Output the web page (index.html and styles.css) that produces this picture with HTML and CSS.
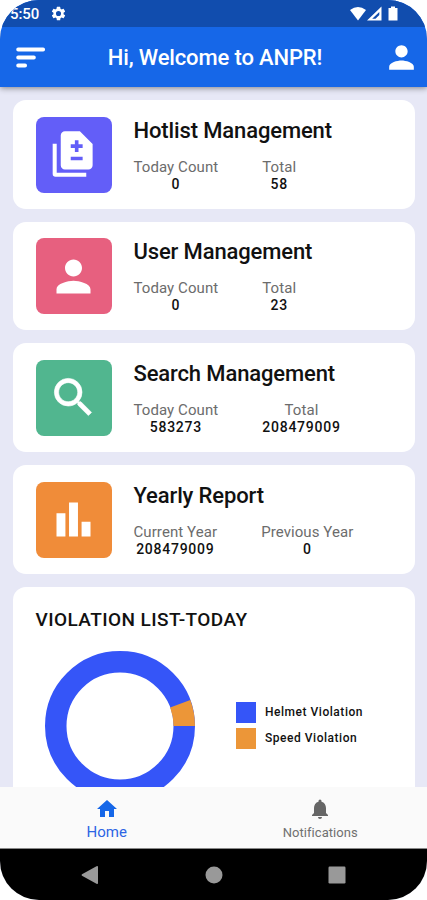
FILE: index.html
```html
<!DOCTYPE html>
<html lang="en">
<head>
<meta charset="utf-8">
<title>ANPR</title>
<link rel="stylesheet" href="styles.css">
</head>
<body>
<div class="phone">
  <header>
    <div class="status">
      <span class="clock">5:50</span>
      <svg class="gear" viewBox="0 0 24 24"><path d="M19.14 12.94c.04-.3.06-.61.06-.94s-.02-.64-.07-.94l2.03-1.58a.49.49 0 0 0 .12-.61l-1.92-3.32a.49.49 0 0 0-.59-.22l-2.39.96a7 7 0 0 0-1.62-.94l-.36-2.54a.48.48 0 0 0-.48-.41h-3.84a.47.47 0 0 0-.47.41l-.36 2.54c-.59.24-1.13.57-1.62.94l-2.39-.96a.48.48 0 0 0-.59.22L2.74 8.87a.47.47 0 0 0 .12.61l2.03 1.58a7 7 0 0 0 0 1.88l-2.03 1.58a.49.49 0 0 0-.12.61l1.92 3.32c.12.22.37.29.59.22l2.39-.96c.5.38 1.03.7 1.62.94l.36 2.54c.05.24.24.41.48.41h3.84c.24 0 .44-.17.47-.41l.36-2.54a7 7 0 0 0 1.62-.94l2.39.96c.22.08.47 0 .59-.22l1.92-3.32a.47.47 0 0 0-.12-.61zM12 15.6A3.6 3.6 0 1 1 12 8.400a3.600 3.600 0 0 1 0 7.200z"/></svg>
      <svg class="signals" viewBox="0 0 49 16"><path d="M0 4Q8-2 16 4L8 14.500z"/><path fill-rule="evenodd" d="M31.500 .500v14H17zM29.300 6L22.200 12.800h3.300L29.300 9z"/><path d="M41 .500h4v1.500h2.500v12.500h-9V2H41z"/></svg>
    </div>
    <div class="appbar">
      <svg class="menu" viewBox="0 0 24 24"><g stroke="#fff" stroke-width="2.500" stroke-linecap="round"><path d="M4 6.800h16.200M4 12h10.200M4 17.200h4.500"/></g></svg>
      <h1>Hi, Welcome to ANPR!</h1>
      <svg class="account" viewBox="0 0 24 24"><path d="M12 12c2.210 0 4-1.790 4-4s-1.790-4-4-4-4 1.790-4 4 1.790 4 4 4zm0 2c-2.670 0-8 1.340-8 4v2h16v-2c0-2.660-5.330-4-8-4z"/></svg>
    </div>
  </header>
  <main>
    <section class="card">
      <div class="tile violet"><svg viewBox="0 0 24 24"><path d="M18 22.500H3.500c-.800 0-1.300-.500-1.300-1.300V6.900h1.900v13.700H18zM15 1H8c-1.100 0-2 .900-2 2v14c0 1.100.900 2 2 2h11c1.100 0 2-.900 2-2V7zm1.300 13.700h-5.600v-1.700h5.600zm0-5.800h-1.950v1.950h-1.700V8.900H10.700V7.200h1.950V5.250h1.700V7.200h1.950z"/></svg></div>
      <div class="info"><h2>Hotlist Management</h2>
        <div class="stats"><div><span>Today Count</span><b>0</b></div><div><span>Total</span><b>58</b></div></div></div>
    </section>
    <section class="card">
      <div class="tile pink"><svg viewBox="0 0 24 24"><path d="M12 12c2.210 0 4-1.790 4-4s-1.790-4-4-4-4 1.790-4 4 1.790 4 4 4zm0 2c-2.670 0-8 1.340-8 4v2h16v-2c0-2.660-5.330-4-8-4z"/></svg></div>
      <div class="info"><h2>User Management</h2>
        <div class="stats"><div><span>Today Count</span><b>0</b></div><div><span>Total</span><b>23</b></div></div></div>
    </section>
    <section class="card">
      <div class="tile green"><svg viewBox="0 0 24 24"><path stroke="#fff" stroke-width=".3" d="M15.500 14h-.790l-.280-.270A6.471 6.471 0 0 0 16 9.500 6.500 6.500 0 1 0 9.500 16c1.610 0 3.090-.590 4.230-1.570l.270.280v.790l5 4.990L20.490 19l-4.990-5zm-6 0C7.010 14 5 11.990 5 9.500S7.010 5 9.500 5 14 7.010 14 9.500 11.990 14 9.500 14z"/></svg></div>
      <div class="info"><h2>Search Management</h2>
        <div class="stats"><div><span>Today Count</span><b>583273</b></div><div><span>Total</span><b>208479009</b></div></div></div>
    </section>
    <section class="card">
      <div class="tile orange"><svg viewBox="0 0 24 24"><path d="M4 9h4.200v11H4zM15.800 13H20v7h-4.200zM9.900 4h4.200v16H9.900z"/></svg></div>
      <div class="info"><h2>Yearly Report</h2>
        <div class="stats"><div><span>Current Year</span><b>208479009</b></div><div><span>Previous Year</span><b>0</b></div></div></div>
    </section>
    <section class="card chart">
      <h3>VIOLATION LIST-TODAY</h3>
      <div class="plot">
        <svg class="donut" viewBox="-75 -75 150 150"><circle r="64.250" fill="none" stroke="#3555f8" stroke-width="21.500"/><path fill="#ec9638" d="M53.500 0H75A75 75 0 0 0 70.340-26.020L50.180-18.560A53.500 53.500 0 0 1 53.500 0z"/></svg>
        <ul><li><i class="helmet"></i>Helmet Violation</li><li><i class="speed"></i>Speed Violation</li></ul>
      </div>
    </section>
  </main>
  <nav class="tabs">
    <a class="active"><svg viewBox="0 0 24 24"><path d="M10 20v-6h4v6h5v-8h3L12 3 2 12h3v8z"/></svg><span>Home</span></a>
    <a class="alerts"><svg viewBox="0 0 24 24"><path d="M12 22c1.100 0 2-.900 2-2h-4c0 1.100.900 2 2 2zm6-6v-5c0-3.070-1.630-5.640-4.500-6.320V4a1.500 1.500 0 0 0-3 0v.680C7.640 5.360 6 7.920 6 11v5l-2 2v1h16v-1z"/></svg><span>Notifications</span></a>
  </nav>
  <footer>
    <svg viewBox="0 0 18 20"><path d="M1 9.200Q0 10 1 10.800L15.500 18.800Q17 19.400 17 18V2Q17 .600 15.500 1.200z"/></svg>
    <svg viewBox="0 0 18 20"><circle cx="9" cy="10" r="8.500"/></svg>
    <svg viewBox="0 0 18 20"><rect x=".5" y="1.500" width="17" height="17" rx="1.200"/></svg>
  </footer>
</div>
</body>
</html>
```
FILE: styles.css
```css
* { box-sizing: border-box; margin: 0; padding: 0; }
body { background: #fff; font-family: Roboto, sans-serif; }
svg { display: block; fill: #fff; flex: none; }
.phone { width: 427px; height: 900px; border-radius: 39px; overflow: hidden; background: #e7e8f6; display: flex; flex-direction: column; }
header { flex: none; color: #fff; background: #1667e8; box-shadow: 0 1px 6px rgba(0,0,0,.45); z-index: 1; }
.status { height: 27px; background: #114dae; display: flex; align-items: center; padding: 0 28px 0 10px; }
.clock { font-size: 15px; font-weight: 500; width: 40px; letter-spacing: -.1px; }
.gear { width: 17px; height: 17px; }
.signals { width: 49px; height: 16px; margin-left: auto; }
.appbar { height: 60px; display: flex; align-items: center; justify-content: space-between; padding: 0 7px 0 12px; }
.menu, .account { width: 37px; height: 37px; }
h1 { font-size: 22px; font-weight: 500; line-height: 28px; margin: 2px 2px 0 0; letter-spacing: -.14px; }
main { flex: 1; min-height: 0; overflow: hidden; display: flex; flex-direction: column; gap: 13px; padding: 13.300px 12.500px 0 13px; }
.card { flex: none; height: 108.600px; background: #fff; border-radius: 13px; display: flex; padding: 16.500px 22.500px; gap: 22px; }
.tile { flex: none; width: 76px; height: 76px; border-radius: 8px; display: flex; align-items: center; justify-content: center; }
.tile svg { width: 51px; height: 51px; }
.violet { background: #635ef8; }
.pink { background: #e7607f; }
.green { background: #51b68f; }
.orange { background: #f08c39; }
h2 { font-size: 22px; font-weight: 500; line-height: 26px; padding-top: 1px; color: #111; letter-spacing: -.13px; white-space: nowrap; }
.stats { display: flex; gap: 44px; margin-top: 15px; }
.stats div { display: flex; flex-direction: column; align-items: center; }
.stats span { font-size: 15px; line-height: 17px; color: #6c6c6c; letter-spacing: .08px; white-space: nowrap; }
.stats b { font-size: 14px; line-height: 17px; font-weight: 500; color: #111; letter-spacing: .75px; }
.chart { height: 300px; flex-direction: column; gap: 0; padding-top: 20px; }
h3 { font-size: 19px; font-weight: 500; line-height: 26px; color: #111; letter-spacing: .42px; }
.plot { display: flex; align-items: center; gap: 41px; padding: 18px 0 0 9.500px; }
.donut { width: 150px; height: 150px; }
ul { list-style: none; display: flex; flex-direction: column; gap: 5px; }
li { display: flex; align-items: center; gap: 9px; font-size: 12px; font-weight: 500; line-height: 21px; color: #111; letter-spacing: .53px; white-space: nowrap; }
li i { width: 20px; height: 21px; }
.helmet { background: #3555f8; }
.speed { background: #ec9638; }
.tabs { flex: none; height: 62px; background: #fafafa; border-bottom: 1px solid #888; display: flex; }
.tabs a { flex: 1; display: flex; flex-direction: column; align-items: center; padding-top: 10px; color: #707070; }
.tabs svg { width: 24px; height: 24px; fill: #666; }
.tabs span { font-size: 13px; line-height: 18px; letter-spacing: .05px; margin-top: 3px; }
.tabs .active { color: #2c65e4; }
.tabs .active svg { fill: #1667e8; }
.tabs .active span { font-size: 15px; margin-top: 2px; }
footer { flex: none; height: 51px; background: #000; display: flex; justify-content: space-between; align-items: center; padding: 0 81px; }
footer svg { width: 18px; height: 20px; fill: #999; }
```
